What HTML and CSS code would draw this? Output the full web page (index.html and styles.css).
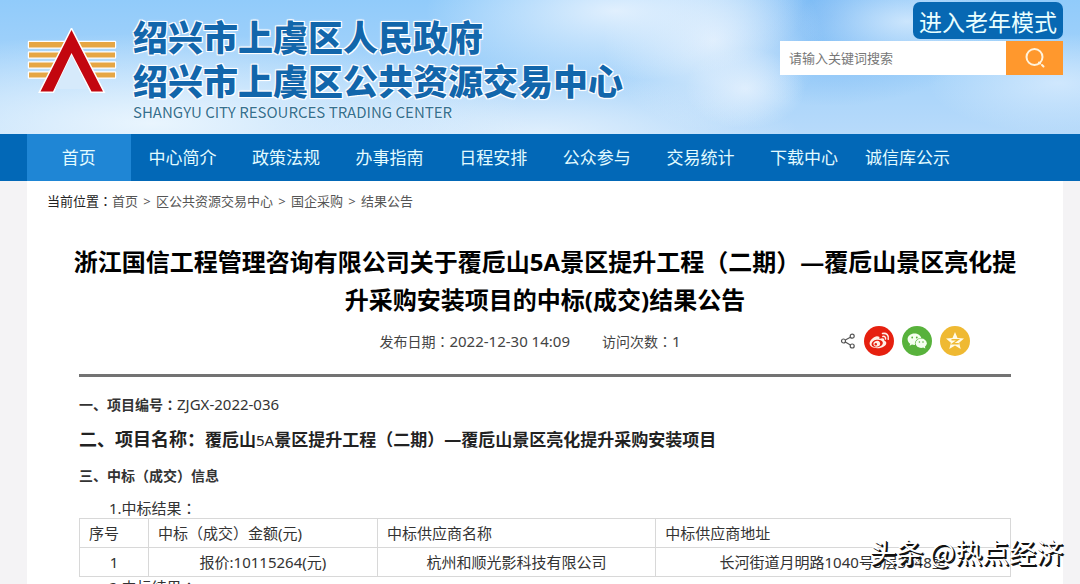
FILE: index.html
```html
<!DOCTYPE html>
<html lang="zh-CN">
<head>
<meta charset="utf-8">
<meta name="viewport" content="width=device-width, initial-scale=1">
<title>绍兴市上虞区公共资源交易中心</title>
<link rel="stylesheet" href="styles.css">
</head>
<body>
<header class="banner">
  <div class="wrap banner-inner">
    <div class="brand">
      <svg class="logo" viewBox="0 0 90 68" width="90" height="68" aria-hidden="true">
        <g fill="#e6a644" stroke="#fff" stroke-width="2.4" stroke-linejoin="round" paint-order="stroke">
          <path d="M2 14H88V19.500H2ZM2 24.500H88V29.500H2ZM2 34.500H88V39.500H2ZM2 44.500H88V49.500H2Z"/>
        </g>
        <path d="M44.500 2L76 63.500H64.500L44.500 25L26 63.500H13.500Z" fill="#c3060f" stroke="#fff" stroke-width="3" paint-order="stroke"/>
        <path d="M44.500 27L55 48L61 61H28Z" fill="#d6eafb"/>
      </svg>
      <div class="brand-text">
        <p class="brand-name">绍兴市上虞区人民政府</p>
        <p class="brand-name">绍兴市上虞区公共资源交易中心</p>
        <p class="brand-en">SHANGYU CITY RESOURCES TRADING CENTER</p>
      </div>
    </div>
    <div class="tools">
      <button class="elder" type="button">进入老年模式</button>
      <form class="search">
        <input class="search-input" type="text" aria-label="搜索" placeholder="请输入关键词搜索">
        <button class="search-button" type="button" aria-label="搜索">
          <svg viewBox="0 0 22 22" width="22" height="22" fill="none" stroke="#fff3dc" stroke-width="2" stroke-linecap="round" aria-hidden="true"><circle cx="10.500" cy="10" r="8"/><path d="M15 15.500L16 16.500M18 18L19.500 19.500"/></svg>
        </button>
      </form>
    </div>
  </div>
</header>
<nav class="nav">
  <div class="wrap nav-list">
    <a class="nav-item active" href="#">首页</a>
    <a class="nav-item" href="#">中心简介</a>
    <a class="nav-item" href="#">政策法规</a>
    <a class="nav-item" href="#">办事指南</a>
    <a class="nav-item" href="#">日程安排</a>
    <a class="nav-item" href="#">公众参与</a>
    <a class="nav-item" href="#">交易统计</a>
    <a class="nav-item" href="#">下载中心</a>
    <a class="nav-item" href="#">诚信库公示</a>
  </div>
</nav>
<div class="wrap">
  <main class="page">
    <div class="crumbs">
      <span class="crumbs-label">当前位置<span class="mid" lang="zh-Hant">：</span></span><a href="#">首页</a><span class="sep">&gt;</span><a href="#">区公共资源交易中心</a><span class="sep">&gt;</span><a href="#">国企采购</a><span class="sep">&gt;</span><a href="#">结果公告</a>
    </div>
    <article class="article">
      <h1 class="title">浙江国信工程管理咨询有限公司关于覆卮山5A景区提升工程<span class="mid" lang="zh-Hant">（</span>二期<span class="mid" lang="zh-Hant">）</span>—覆卮山景区亮化提<br>升采购安装项目的中标(成交)结果公告</h1>
      <div class="meta">
        <div class="meta-text">
          <span>发布日期<span class="mid" lang="zh-Hant">：</span><span class="value">2022-12-30 14:09</span></span>
          <span>访问次数<span class="mid" lang="zh-Hant">：</span><span class="value">1</span></span>
        </div>
        <div class="share">
          <svg class="share-mark" viewBox="0 0 16 16" width="16" height="16" fill="none" stroke="#555" stroke-width="1.200" aria-hidden="true"><circle cx="3.500" cy="8" r="2"/><circle cx="12.200" cy="3.200" r="2"/><circle cx="12.200" cy="13" r="2"/><path d="M5.300 7L10.400 4.200M5.300 9L10.400 12"/></svg>
          <a class="share-link weibo" href="#" aria-label="分享到微博">
            <svg viewBox="0 0 30 30" width="30" height="30" aria-hidden="true"><path d="M13 10.300C10 10.300 5.600 14.300 5.600 17.600C5.600 20.500 9.200 22.200 13.300 22.200C18.700 22.200 22.300 19.400 22.300 16.900C22.300 15.500 21.200 14.800 20.100 14.400C20.800 12.300 18.500 11.700 15.400 13C16 11 15 10.300 13 10.300Z" fill="#fff0e6"/><ellipse cx="13.200" cy="17.500" rx="5.700" ry="3.800" transform="rotate(-9 13.200 17.500)" fill="#e6200f"/><ellipse cx="12.800" cy="17.700" rx="3.400" ry="2.900" transform="rotate(-18 12.800 17.700)" fill="#fff0e6"/><circle cx="11.800" cy="18.300" r="1.200" fill="#e6200f"/><path d="M18.500 7.600C22.300 6.600 25.300 9.500 24.200 13.200M18.800 10.400C20.700 10 22 11.400 21.500 13" fill="none" stroke="#fff0e6" stroke-width="1.500" stroke-linecap="round"/></svg>
          </a>
          <a class="share-link wechat" href="#" aria-label="分享到微信">
            <svg viewBox="0 0 30 30" width="30" height="30" aria-hidden="true"><path d="M12.500 7.500C8.600 7.500 5.600 10 5.600 13.200C5.600 15.100 6.600 16.700 8.200 17.700L7.600 19.800L10 18.600C11 18.900 12 19 13 18.900C12.300 15 15.500 12 19.300 12C18.700 9.400 15.900 7.500 12.500 7.500Z" fill="#f5fff0"/><ellipse cx="19.200" cy="17.300" rx="5.600" ry="4.700" fill="#f5fff0"/><path d="M21 21.400L23.400 22.600L22.900 20.400Z" fill="#f5fff0"/><g fill="#58b23c"><circle cx="10.200" cy="11.500" r=".9"/><circle cx="14.800" cy="11.500" r=".9"/><circle cx="17.400" cy="16" r=".8"/><circle cx="21" cy="16" r=".8"/></g></svg>
          </a>
          <a class="share-link qzone" href="#" aria-label="分享到QQ空间">
            <svg viewBox="0 0 30 30" width="30" height="30" aria-hidden="true"><path d="M15 6L17.500 12L24 12.500L19.100 16.700L20.700 23L15 19.600L9.300 23L10.900 16.700L6 12.500L12.500 12Z" fill="#fffbe8"/><path d="M11.500 13.800H18L12.500 17.800H18.800" fill="none" stroke="#efb932" stroke-width="1.400"/></svg>
          </a>
        </div>
      </div>
      <section class="content">
        <p class="line"><b>一、项目编号<span class="mid" lang="zh-Hant">：</span></b><span class="value">ZJGX-2022-036</span></p>
        <p class="line project"><b>二、项目名称：</b><strong>覆卮山<span class="code">5A</span>景区提升工程（二期）—覆卮山景区亮化提升采购安装项目</strong></p>
        <p class="line"><b>三、中标<span class="mid" lang="zh-Hant">（</span>成交<span class="mid" lang="zh-Hant">）</span>信息</b></p>
        <p class="sub">1.中标结果<span class="mid" lang="zh-Hant">：</span></p>
        <table class="result">
          <colgroup><col class="c1"><col class="c2"><col class="c3"><col class="c4"></colgroup>
          <thead><tr><th>序号</th><th>中标<span class="mid" lang="zh-Hant">（</span>成交<span class="mid" lang="zh-Hant">）</span>金额(元)</th><th>中标供应商名称</th><th>中标供应商地址</th></tr></thead>
          <tbody><tr><td>1</td><td>报价:10115264(元)</td><td>杭州和顺光影科技有限公司</td><td>长河街道月明路1040号3层3048室</td></tr></tbody>
        </table>
        <p class="sub">2.中标结果<span class="mid" lang="zh-Hant">：</span></p>
      </section>
    </article>
  </main>
</div>
<div class="watermark">头条 @热点经济</div>
</body>
</html>
```
FILE: styles.css
```css
* { box-sizing: border-box; }
html { height: 100%; overflow: hidden; }
body {
  position: relative;
  height: 100%;
  margin: 0;
  overflow: hidden;
  background: #f4f3f5;
  color: #333;
  font: 15px/24px "Noto Sans", "Noto Sans CJK SC", sans-serif;
}
p, h1 { margin: 0; }
a { color: inherit; text-decoration: none; }
.wrap { padding: 0 17px 0 27px; }
.mid { font-family: "Noto Sans CJK TC", sans-serif; line-height: 1; }

.banner {
  background:
    radial-gradient(ellipse 190px 70px at 57% 8%, #e6f2feee, #e6f2fe00),
    radial-gradient(ellipse 110px 90px at 66% 30%, #e3f0fdee, #e3f0fd00),
    radial-gradient(ellipse 60px 40px at 69% 66%, #e4f1fedd, #e4f1fe00),
    radial-gradient(ellipse 110px 45px at 84% 16%, #dceefecc, #dceefe00),
    radial-gradient(ellipse 130px 50px at 98% 62%, #d9ecfecc, #d9ecfe00),
    radial-gradient(ellipse 380px 90px at 14% 92%, #e9f5fe, #e6f3fe00),
    radial-gradient(ellipse 260px 60px at 50% 100%, #dfeffd, #d9ebfd00),
    radial-gradient(ellipse 160px 90px at 77% 12%, #79b8f4, #79b8f400),
    linear-gradient(#91cbfa, #b7dafa);
}
.banner-inner { display: flex; justify-content: space-between; height: 134px; }
.brand { display: flex; gap: 16px; }
.logo { margin-top: 28px; }
.brand-text { padding-top: 14px; white-space: nowrap; }
.brand-name {
  color: #1266ab;
  font: 900 35px/44px "Noto Sans CJK SC", sans-serif;
  text-shadow: 1px 1px #fff, -1px -1px #fff, 1px -1px #fff, -1px 1px #fff, 0 0 3px #fff;
}
.brand-en { color: #35708f; font: 15px/20px "Noto Sans CJK SC", sans-serif; text-shadow: 0 0 2px #fff; }
.tools { display: flex; flex-direction: column; align-items: flex-end; gap: 2px; padding-top: 2px; }
.elder {
  height: 37px;
  padding: 0 6px;
  border: 0;
  border-radius: 7px;
  background: #0768b3;
  color: #e9ffff;
  font: 23px/36px "Noto Sans CJK SC", sans-serif;
}
.search { display: flex; width: 283px; height: 34px; }
.search-input {
  flex: 1;
  min-width: 0;
  padding: 0 9px;
  border: 0;
  background: #fff;
  font: 13px/20px "Noto Sans CJK SC", sans-serif;
}
.search-input::placeholder { color: #777; }
.search-button {
  display: grid;
  place-items: center;
  width: 57px;
  padding: 0;
  border: 0;
  background: #ff982d;
}

.nav { background: #0268b7; }
.nav-list { display: grid; grid-template-columns: repeat(10, 1fr); }
.nav-item { color: #e2fbff; font-size: 17px; line-height: 47px; text-align: center; white-space: nowrap; }
.nav-item.active { background: #1f86d5; }

.page { min-height: 420px; background: #fff; }
.crumbs { display: flex; padding: 8px 20px 0; color: #555; font-size: 13px; }
.crumbs-label { color: #222; }
.sep { width: 18px; text-align: center; }

.article { padding: 0 52px; }
.title {
  display: flow-root;
  margin: 30px -10px 0;
  color: #000;
  font-size: 24px;
  line-height: 38px;
  text-align: center;
  white-space: nowrap;
}
.meta {
  display: grid;
  grid-template-columns: 1fr auto 1fr;
  align-items: center;
  height: 58px;
  padding-bottom: 11px;
  border-bottom: 3px solid #737373;
}
.meta-text { grid-column: 2; display: flex; gap: 32px; padding-right: 30px; color: #444; font-size: 14px; }
.share { display: flex; justify-content: flex-end; align-items: center; gap: 8px; padding-right: 41px; }
.share-link { width: 30px; height: 30px; border-radius: 50%; }
.weibo { background: #e6200f; }
.wechat { background: #58b23c; }
.qzone { background: #efb932; }
.value { font-size: 15px; }

.content { padding-top: 15px; }
.line { margin-bottom: 10px; font-size: 14px; }
.line.project { margin-bottom: 12px; color: #222; font-size: 17px; }
.project b { font-size: 18px; }
.code { font-size: 15px; font-weight: 400; }
.sub { padding-left: 30px; line-height: 20px; }
.result { width: 100%; border-collapse: collapse; table-layout: fixed; }
.c1 { width: 7.400%; }
.c2 { width: 24.600%; }
.c3 { width: 29.900%; }
.result th, .result td {
  height: 29px;
  padding: 0 9px;
  border: 1px solid #d8d8d8;
  font-weight: 400;
  line-height: 24px;
  text-align: center;
  white-space: nowrap;
}
.result th { text-align: left; }
.watermark {
  position: absolute;
  right: 17px;
  bottom: 14px;
  color: #fff;
  font: 27px/36px "Noto Sans CJK SC", sans-serif;
  text-shadow: 1px 1px #111, 2px 2px #111;
}
```
